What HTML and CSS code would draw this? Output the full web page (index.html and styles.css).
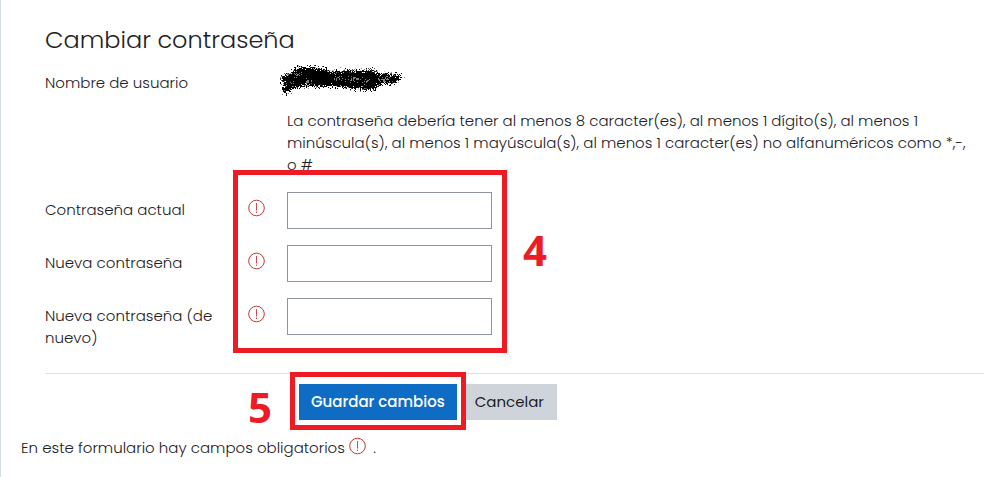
FILE: index.html
```html
<!DOCTYPE html>
<html lang="es">
<head>
    <meta charset="UTF-8">
    <meta name="viewport" content="width=device-width, initial-scale=1.0">
    <title>Cambiar contraseña</title>
    <link rel="stylesheet" href="styles.css">
</head>
<body>
    <svg class="sprite" aria-hidden="true">
        <symbol id="required" viewBox="0 0 18 18">
            <circle cx="8.5" cy="9" r="7.8" fill="none" stroke="#c43a2e" stroke-width="1"/>
            <path d="M8.5 4v7.5M8.5 12.5v1.5" stroke="#cc4a5c" stroke-width="1"/>
        </symbol>
    </svg>

    <main class="page">
        <form class="form">
            <h1>Cambiar contraseña</h1>
            <div class="row">
                <span class="label">Nombre de usuario</span>
                <div class="field">
                    <svg class="scribble" width="126" height="32" viewBox="0 0 126 32" role="img" aria-label="Usuario oculto">
                        <filter id="rough" x="-5%" y="-20%" width="110%" height="140%">
                            <feTurbulence type="fractalNoise" baseFrequency="0.8" numOctaves="2" seed="4" result="noise"/>
                            <feDisplacementMap in="SourceGraphic" in2="noise" scale="13" xChannelSelector="R" yChannelSelector="G"/>
                        </filter>
                        <g filter="url(#rough)">
                            <path d="M2 12 11 9 17 3 31 2 46 4 54 7 69 5 80 6 93 5 99 8 110 9 117 10 124 10 120 16 110 19 101 19 96 25 90 25 77 24 63 22 47 22 33 21 20 22 12 25 8 29 3 26 5 20Z"/>
                            <path d="M55 13h8M68 14h13M85 16h5M16 10h6M27 16h5M104 14h6M12 18h3M98 14h3" stroke="#fff" stroke-width="1"/>
                        </g>
                    </svg>
                </div>
            </div>
            <div class="row">
                <p class="hint">La contraseña debería tener al menos 8 caracter(es), al menos 1 dígito(s), al menos 1 minúscula(s), al menos 1 mayúscula(s), al menos 1 caracter(es) no alfanuméricos como *,-, o #</p>
            </div>
            <div class="passwords">
                <div class="row">
                    <label class="label" for="current">Contraseña actual</label>
                    <svg class="icon"><use href="#required"/></svg>
                    <div class="field"><input type="password" id="current" required></div>
                </div>
                <div class="row">
                    <label class="label" for="new">Nueva contraseña</label>
                    <svg class="icon"><use href="#required"/></svg>
                    <div class="field"><input type="password" id="new" required></div>
                </div>
                <div class="row">
                    <label class="label" for="repeat">Nueva contraseña (de nuevo)</label>
                    <svg class="icon"><use href="#required"/></svg>
                    <div class="field"><input type="password" id="repeat" required></div>
                </div>
                <div class="mark mark-fields"></div>
                <span class="step step-fields">4</span>
            </div>
            <div class="actions">
                <div class="save">
                    <button type="submit" class="btn btn-primary">Guardar cambios</button>
                    <div class="mark mark-save"></div>
                    <span class="step step-save">5</span>
                </div>
                <button type="button" class="btn btn-secondary">Cancelar</button>
            </div>
        </form>
        <p class="note">En este formulario hay campos obligatorios <svg class="icon"><use href="#required"/></svg> .</p>
    </main>
</body>
</html>
```
FILE: styles.css
```css
* {
    box-sizing: border-box;
}
body {
    margin: 0;
    background-color: #fff;
    color: #1d2125;
    font-family: Poppins, Inter, sans-serif;
    font-size: 15px;
    font-weight: 300;
    line-height: 22px;
}
.sprite {
    display: none;
}
.page {
    min-height: 100vh;
    padding: 23px 20px 16px;
    border-left: 1px solid #d5dfe3;
}
.form {
    padding-left: 24px;
}
h1 {
    margin: 0 0 8px;
    font-size: 24px;
    font-weight: 300;
    line-height: 34px;
}
.row {
    display: grid;
    grid-template-columns: minmax(0, 1fr) 39px minmax(0, 697px);
    margin-bottom: 16px;
}
.label {
    padding: 7px 24px 0 0;
}
.field {
    grid-column: 3;
}
.row .icon {
    margin-top: 7px;
}
.icon {
    width: 18px;
    height: 18px;
}
.scribble {
    display: block;
    margin-left: -8px;
}
.hint {
    grid-column: 3;
    margin: -3px 0 0;
    padding-right: 8px;
}
input {
    display: block;
    width: 205px;
    height: 37px;
    padding: 6px 12px;
    border: 1px solid #8f959e;
    background-color: #fff;
    font: inherit;
}
.passwords {
    position: relative;
}
.actions {
    display: flex;
    gap: 5px;
    padding: 10px 0 0 254px;
    border-top: 1px solid #dee2e6;
    margin-top: 24px;
}
.save {
    position: relative;
}
.btn {
    height: 36px;
    padding: 0 12px;
    border: none;
    color: #1d2125;
    font: inherit;
    cursor: pointer;
}
.btn-primary {
    background-color: #0f6cc5;
    color: #fff;
    font-weight: 500;
}
.btn-secondary {
    padding: 0 13px;
    background-color: #ced4da;
    font-weight: 400;
}
.note {
    margin: 17px 0 0;
}
.note .icon {
    margin-right: 2px;
    vertical-align: -2px;
}

/* step annotations */
.mark {
    position: absolute;
    border: 5px solid #ed1c24;
    pointer-events: none;
}
.mark-fields {
    top: -22px;
    right: 477px;
    bottom: -4px;
    width: 274px;
}
.mark-save {
    inset: -12px -9px -10px;
}
.step {
    position: absolute;
    color: #ed1c24;
    font-family: "Open Sans", sans-serif;
    font-size: 42px;
    font-weight: 700;
    line-height: 42px;
}
.step-fields {
    top: 37px;
    right: 437px;
}
.step-save {
    top: 2px;
    left: -51px;
}
```
